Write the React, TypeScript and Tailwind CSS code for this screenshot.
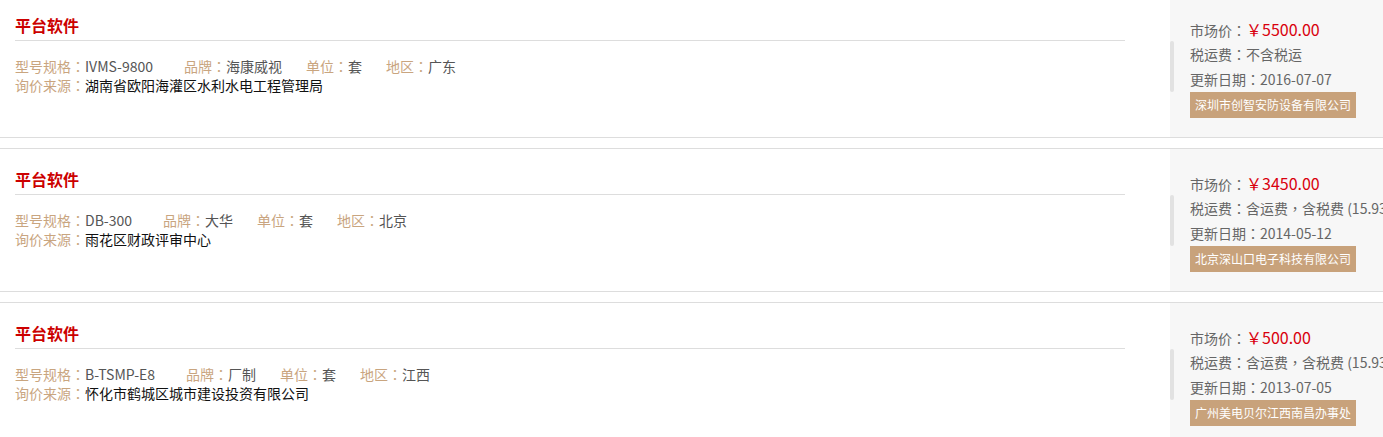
import React from "react";

type Quote = {
  title: string;
  model: string;
  brand: string;
  unit: string;
  region: string;
  source: string;
  price: string;
  tax: string;
  date: string;
  supplier: string;
};

const quotes: Quote[] = [
  {
    title: "平台软件",
    model: "IVMS-9800",
    brand: "海康威视",
    unit: "套",
    region: "广东",
    source: "湖南省欧阳海灌区水利水电工程管理局",
    price: "5500.00",
    tax: "不含税运",
    date: "2016-07-07",
    supplier: "深圳市创智安防设备有限公司",
  },
  {
    title: "平台软件",
    model: "DB-300",
    brand: "大华",
    unit: "套",
    region: "北京",
    source: "雨花区财政评审中心",
    price: "3450.00",
    tax: "含运费，含税费 (15.93%)",
    date: "2014-05-12",
    supplier: "北京深山口电子科技有限公司",
  },
  {
    title: "平台软件",
    model: "B-TSMP-E8",
    brand: "厂制",
    unit: "套",
    region: "江西",
    source: "怀化市鹤城区城市建设投资有限公司",
    price: "500.00",
    tax: "含运费，含税费 (15.93%)",
    date: "2013-07-05",
    supplier: "广州美电贝尔江西南昌办事处",
  },
];

// centred full-width punctuation, as in the original page
const P = ({ children }: { children: string }) => (
  <span style={{ fontFamily: '"Noto Sans CJK TC", sans-serif' }}>{children}</span>
);

const withPunct = (text: string) =>
  text.split(/(，)/).map((part, i) => (part === "，" ? <P key={i}>，</P> : part));

const Spec = ({ label, value, className }: { label: string; value: string; className?: string }) => (
  <span className={className}>
    <span className="text-[#c9a57f]">
      {label}
      <P>：</P>
    </span>
    <span className="text-[#555]">{value}</span>
  </span>
);

const QuoteRow = ({ q }: { q: Quote }) => (
  <div className="flex h-[144px] border-y border-[#ddd] bg-white mb-[10px]">
    {/* Left: product info */}
    <div className="w-[1170px] shrink-0 pl-[15px] pr-[45px] pt-[18px]">
      <h3 className="h-[24px] leading-[24px] text-[16px] font-bold text-[#cc0000]">
        {q.title}
      </h3>
      <div className="mt-[3px] h-px bg-[#ddd]"></div>
      <div className="mt-[15px] leading-[20px] text-[14px] whitespace-nowrap">
        <Spec label="型号规格" value={q.model} className="mr-[31px]" />
        <Spec label="品牌" value={q.brand} className="mr-[24px]" />
        <Spec label="单位" value={q.unit} className="mr-[24px]" />
        <Spec label="地区" value={q.region} />
      </div>
      <div className="leading-[19px] text-[14px]">
        <span className="text-[#c9a57f]">
          询价来源<P>：</P>
        </span>
        <span className="text-[#111]">{q.source}</span>
      </div>
    </div>

    {/* Right: price panel */}
    <div className="flex-1 min-w-0 overflow-hidden bg-[#f7f7f7] flex items-start">
      <div className="mt-[46px] w-[4px] h-[51px] shrink-0 rounded-full bg-[#e2e2e2]"></div>
      <div className="pl-[16px] pt-[22px] whitespace-nowrap text-[14px] text-[#666]">
        <div className="h-[25px] leading-[25px]">
          市场价<P>：</P>
          <span className="text-[16px] text-[#d9000d]">￥{q.price}</span>
        </div>
        <div className="h-[25px] leading-[25px]">
          税运费<P>：</P>
          {withPunct(q.tax)}
        </div>
        <div className="h-[25px] leading-[25px]">
          更新日期<P>：</P>
          {q.date}
        </div>
        <div className="inline-block h-[26px] leading-[26px] px-[5px] bg-[#c8a27b] text-white text-[12px]">
          {q.supplier}
        </div>
      </div>
    </div>
  </div>
);

export default function App() {
  return (
    <div
      className="w-full h-[437px] overflow-hidden bg-white"
      style={{ fontFamily: '"Noto Sans CJK SC", "Noto Sans", sans-serif' }}
    >
      <div className="mt-[-6px]">
        {quotes.map((q, i) => (
          <QuoteRow key={i} q={q} />
        ))}
      </div>
    </div>
  );
}
